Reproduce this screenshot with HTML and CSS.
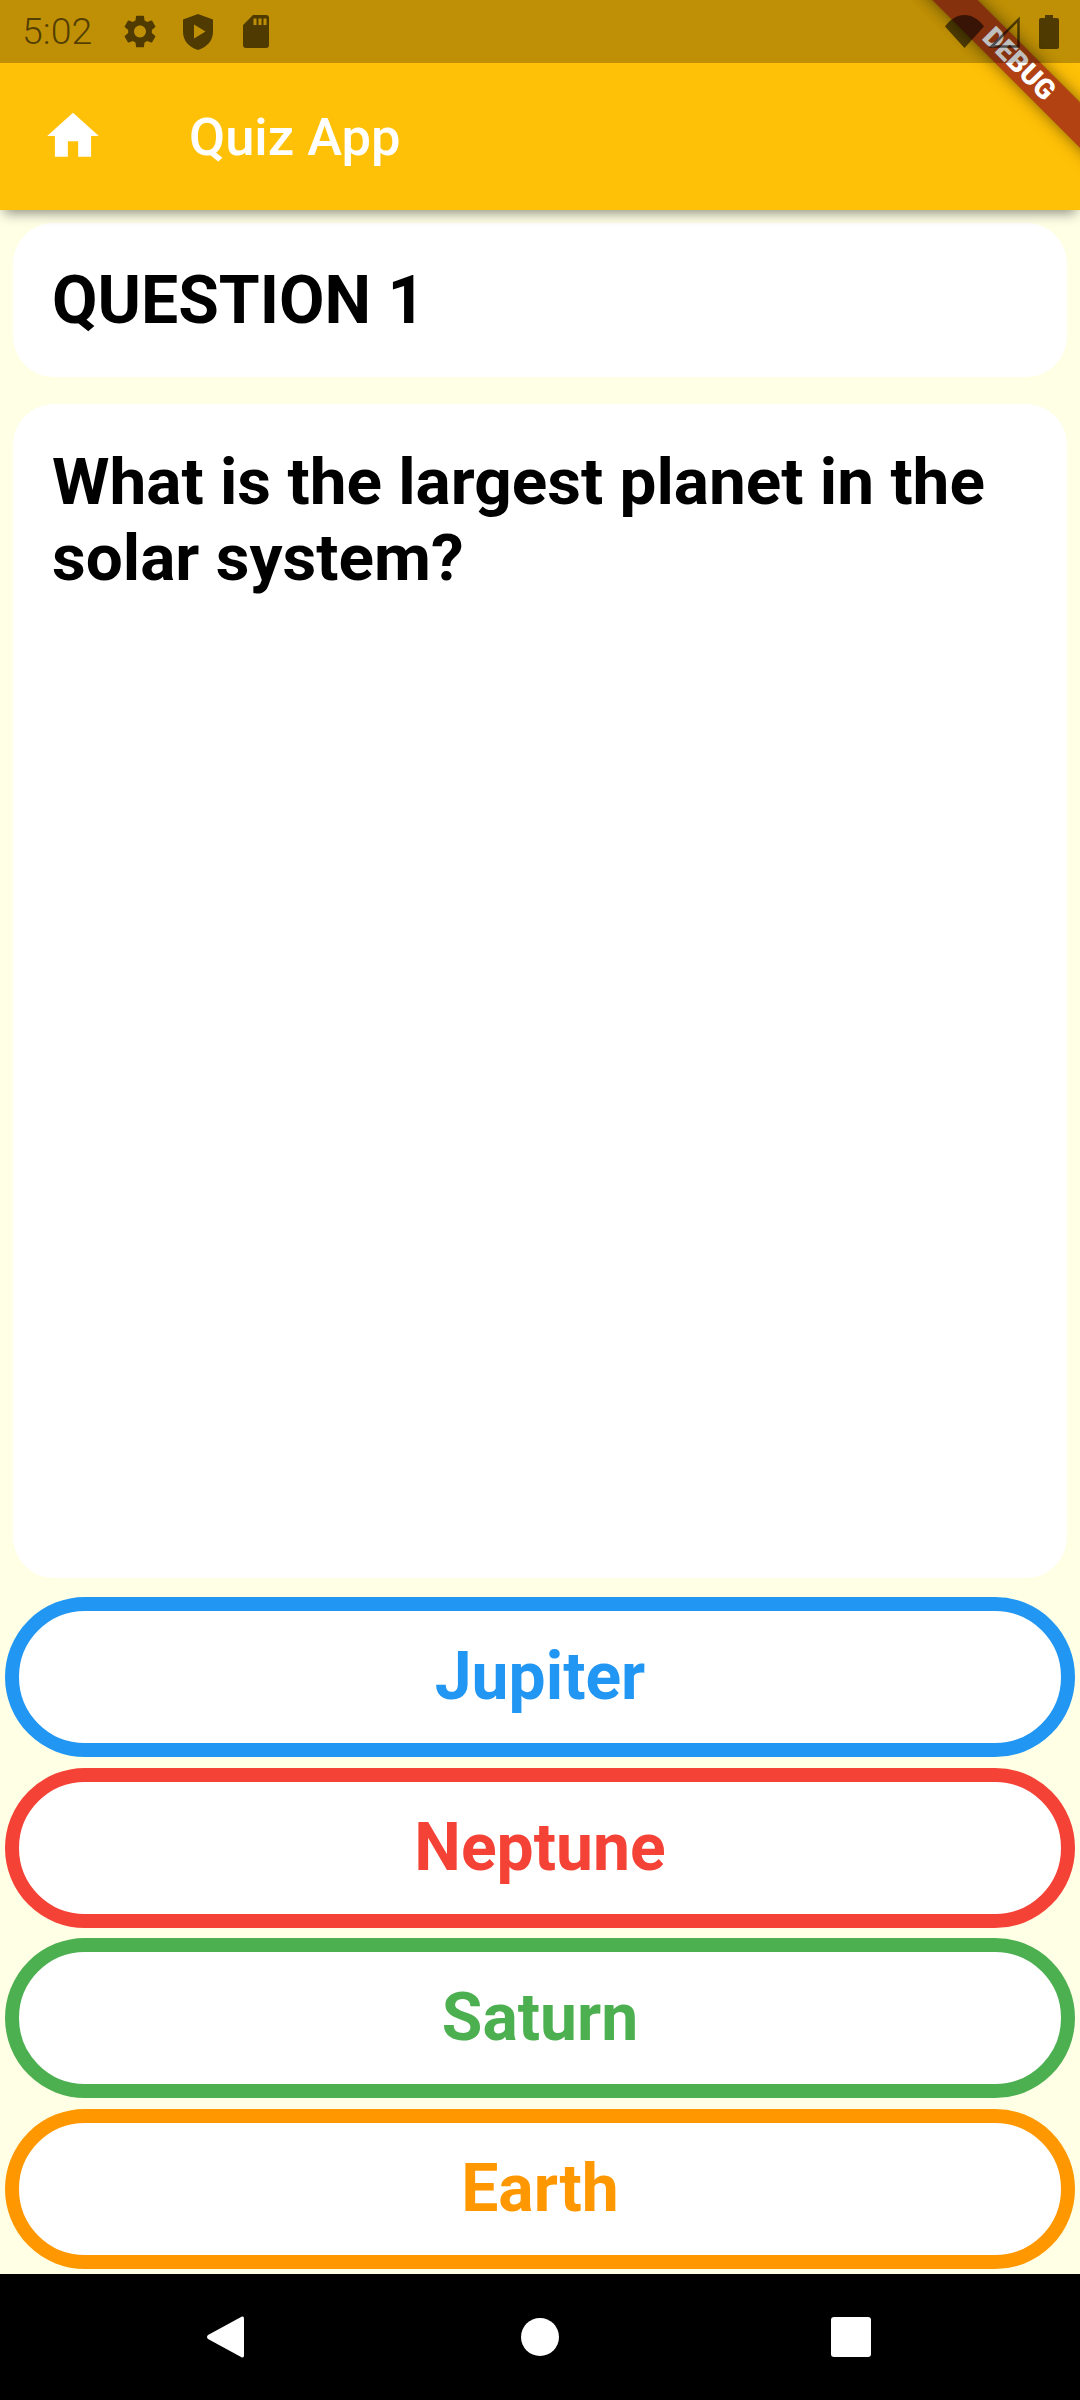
FILE: index.html
```html
<!DOCTYPE html>
<html lang="en">
<head>
<meta charset="utf-8">
<title>Quiz App</title>
<link rel="stylesheet" href="styles.css">
</head>
<body>
<div class="screen">
  <div class="statusbar">
    <span class="time">5:02</span>
    <svg class="ic-gear" viewBox="2.6 2 18.8 20"><path d="M19.14 12.94c.04-.3.06-.61.06-.94 0-.32-.02-.64-.07-.94l2.03-1.58c.18-.14.23-.41.12-.61l-1.92-3.32c-.12-.22-.37-.29-.59-.22l-2.39.96c-.5-.38-1.03-.7-1.62-.94l-.36-2.54c-.04-.24-.24-.41-.48-.41h-3.84c-.24 0-.43.17-.47.41l-.36 2.54c-.59.24-1.13.57-1.62.94l-2.39-.96c-.22-.08-.47 0-.59.22L2.74 8.87c-.12.21-.08.47.12.61l2.03 1.58c-.05.3-.09.63-.09.94s.02.64.07.94l-2.03 1.58c-.18.14-.23.41-.12.61l1.92 3.32c.12.22.37.29.59.22l2.39-.96c.5.38 1.03.7 1.62.94l.36 2.54c.05.24.24.41.48.41h3.84c.24 0 .44-.17.47-.41l.36-2.54c.59-.24 1.13-.56 1.62-.94l2.39.96c.22.08.47 0 .59-.22l1.92-3.32c.12-.22.07-.47-.12-.61l-2.01-1.58zM12 15.6c-1.98 0-3.6-1.62-3.6-3.6s1.62-3.6 3.6-3.6 3.6 1.62 3.6 3.6-1.62 3.6-3.6 3.6z"/></svg>
    <svg class="ic-shield" viewBox="0 0 30 36"><path fill-rule="evenodd" d="M15 0 30 5.5V18c0 8.2-6 15.500-15 18C6 33.500 0 26.200 0 18V5.500zM11 10.500v14l11.500-7z"/></svg>
    <svg class="ic-sd" viewBox="0 0 26 33"><path fill-rule="evenodd" d="M10 0H23a3 3 0 0 1 3 3V30a3 3 0 0 1-3 3H3a3 3 0 0 1-3-3V10zM10.500 3.500V10h3V3.500zM15.500 3.500V10h3V3.500zM20.500 3.500V10h3V3.500z"/></svg>
    <span class="spacer"></span>
    <svg class="ic-wifi" viewBox="0 0 39 33"><path d="M0 11.500C5 4.500 12 0 19.500 0S34 4.500 39 11.500L19.500 33z"/></svg>
    <svg class="ic-signal" viewBox="0 0 32 32"><path fill="none" stroke="currentColor" stroke-width="2.500" d="M30.500 3.500V30.500H3.500z"/></svg>
    <svg class="ic-battery" viewBox="0 0 20 34"><path d="M6 0H14V3H18a2 2 0 0 1 2 2V32a2 2 0 0 1-2 2H2a2 2 0 0 1-2-2V5a2 2 0 0 1 2-2H6z"/></svg>
  </div>
  <header class="appbar">
    <svg class="ic-home" viewBox="0 0 24 24"><path d="M10 20v-6h4v6h5v-8h3L12 3 2 12h3v8z"/></svg>
    <h1 class="title">Quiz App</h1>
  </header>
  <main class="content">
    <section class="card card-heading"><h2 class="heading">QUESTION 1</h2></section>
    <section class="card card-question"><p class="question">What is the largest planet in the solar system?</p></section>
    <div class="answers">
      <button class="answer answer-blue">Jupiter</button>
      <button class="answer answer-red">Neptune</button>
      <button class="answer answer-green">Saturn</button>
      <button class="answer answer-orange">Earth</button>
    </div>
  </main>
  <nav class="navbar">
    <svg class="nav-back" viewBox="0 0 37 42"><path d="M35 0.500Q37 0 37 2.500V39.500Q37 42 35 41.500L1 23Q-1 21 1 19z"/></svg>
    <span class="nav-home"></span>
    <span class="nav-recent"></span>
  </nav>
  <div class="banner">DEBUG</div>
</div>
</body>
</html>
```

FILE: styles.css
```css
* { box-sizing: border-box; }
html, body { margin: 0; padding: 0; }
body { font-family: Roboto, "Liberation Sans", sans-serif; }

.screen {
  position: relative;
  width: 1080px;
  height: 2400px;
  overflow: hidden;
  display: flex;
  flex-direction: column;
  background: #ffffe6;
}

.statusbar {
  position: relative;
  z-index: 3;
  height: 63px;
  margin-bottom: -63px;
  flex: none;
  display: flex;
  align-items: center;
  padding: 0 21px 0 22px;
  background: rgba(0, 0, 0, 0.25);
  color: rgba(0, 0, 0, 0.59);
  fill: rgba(0, 0, 0, 0.59);
}
.time { font-size: 37.500px; line-height: 63px; width: 102px; font-weight: 350; }
.spacer { flex: 1; }
.ic-gear { width: 32px; height: 33px; margin-right: 27px; }
.ic-shield { width: 30px; height: 36px; margin-right: 30px; }
.ic-sd { width: 26px; height: 33px; }
.ic-wifi { width: 39px; height: 33px; margin-right: 4px; }
.ic-signal { width: 32px; height: 32px; margin-right: 19px; }
.ic-battery { width: 20px; height: 34px; }

.appbar {
  position: relative;
  z-index: 1;
  height: 210px;
  flex: none;
  display: flex;
  align-items: center;
  padding: 63px 0 0 42px;
  background: #ffc107;
  box-shadow: 0 7px 12px -4px rgba(0, 0, 0, 0.45);
}
.ic-home { width: 62px; height: 62px; fill: #fff; margin-right: 85px; margin-top: -2px; }
.title { margin: 2px 0 0; color: #fff; font-size: 52.500px; font-weight: 500; line-height: 1; }

.content {
  flex: 1;
  min-height: 0;
  display: flex;
  flex-direction: column;
  padding-top: 13px;
}
.card { margin: 0 13px; background: #fff; border-radius: 41px; padding: 0 39px; }
.card-heading { height: 154px; display: flex; align-items: center; flex: none; }
.card-question { margin-top: 27px; height: 1174px; flex: none; padding-top: 40px; }
.heading { margin: 2px 0 0; font-size: 66px; font-weight: 700; line-height: 1; color: #000; }
.question { margin: 0; font-size: 65.700px; font-weight: 700; line-height: 75.500px; color: #000; }

.answers { display: flex; flex-direction: column; gap: 10.670px; padding: 19px 5px 0; }
.answer {
  height: 160px;
  border: 14px solid;
  border-radius: 80px;
  background: #fff;
  font-family: inherit;
  font-size: 66px;
  font-weight: 700;
  padding: 0 0 1px;
}
.answer-blue { color: #2196f3; border-color: #2196f3; }
.answer-red { color: #f44336; border-color: #f44336; }
.answer-green { color: #4caf50; border-color: #4caf50; }
.answer-orange { color: #ff9800; border-color: #ff9800; }

.navbar {
  height: 126px;
  flex: none;
  display: flex;
  align-items: center;
  background: #000;
  padding-left: 207px;
}
.nav-back { width: 37px; height: 42px; fill: #fff; margin-right: 277px; }
.nav-home { width: 38px; height: 38px; border-radius: 50%; background: #fff; margin-right: 272px; }
.nav-recent { width: 40px; height: 40px; border-radius: 3px; background: #fff; }

.banner {
  position: absolute;
  left: 879px;
  top: 48px;
  width: 280px;
  height: 32px;
  transform: rotate(45deg);
  background: rgba(153, 23, 23, 0.75);
  box-shadow: 0 0 16px rgba(0, 0, 0, 0.5);
  color: #fff;
  font-size: 28px;
  font-weight: 900;
  line-height: 32px;
  text-align: center;
  z-index: 2;
}
```
